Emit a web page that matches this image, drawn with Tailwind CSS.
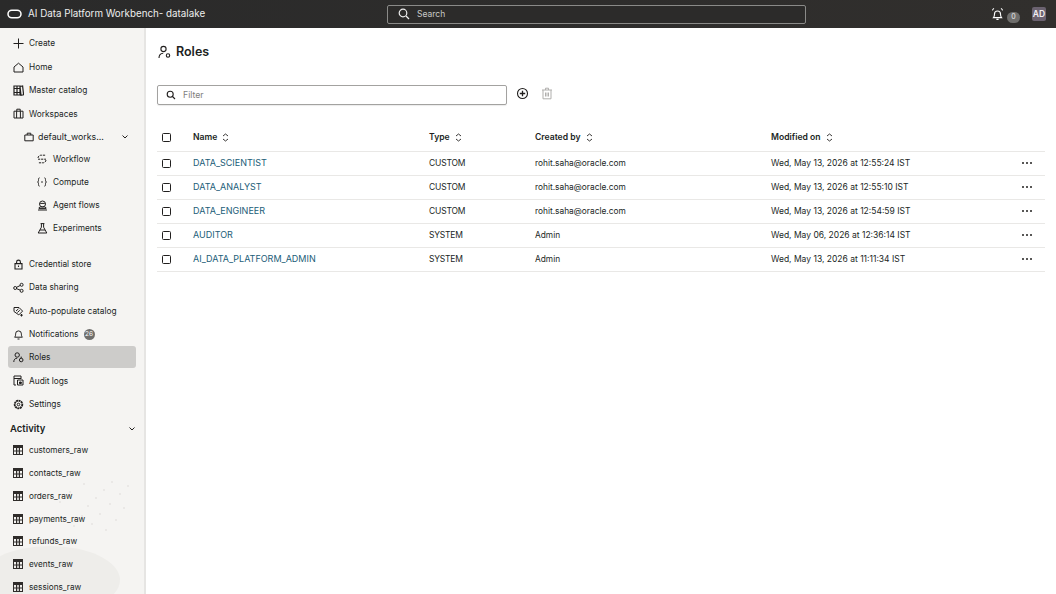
<!DOCTYPE html>
<html lang="en">
<head>
    <meta charset="UTF-8">
    <meta name="viewport" content="width=device-width, initial-scale=1.0">
    <title>Roles - AI Data Platform Workbench</title>
    <script src="https://cdn.jsdelivr.net/npm/@tailwindcss/browser@4"></script>
</head>
<body class="h-[594px] w-[1056px] overflow-hidden bg-white font-['Inter',sans-serif] text-[#211f1e]">
    <!-- top bar -->
    <header class="flex h-[28px] items-center bg-gradient-to-r from-[#2a2a2a] to-[#312f2d] pl-[7px] text-white">
        <svg class="w-[15px] h-[10px]" viewBox="0 0 15 10" fill="none" stroke="#fff" stroke-width="1.5"><rect x="1" y="1.2" width="13" height="7.6" rx="3.8"/></svg>
        <span class="ml-[6px] w-[176px] whitespace-nowrap text-[9.8px] text-[#eeeeee]">AI Data Platform Workbench- datalake</span>
        <div class="ml-[183px] flex h-[19px] w-[419px] shrink-0 items-center rounded-[2px] border border-[#8a8a88] bg-[#2c2b2a] pl-[10px]">
            <svg class="w-[12px] h-[12px]" viewBox="0 0 12 12" fill="none" stroke="#eee" stroke-width="1.2"><circle cx="5" cy="5" r="3.8"/><path d="M8 8l3 3"/></svg>
            <span class="ml-[7px] text-[8.5px] text-[#c9c9c7]">Search</span>
        </div>
        <svg class="ml-[184px] w-[15px] h-[15px]" viewBox="0 0 15 15" fill="none" stroke="#fff" stroke-width="1.1"><path d="M3.5 10.6c.9-1 1-1.9 1-3.6a3 3 0 0 1 6 0c0 1.7.1 2.6 1 3.6zM6.4 12.4h2.2M2.4 3.4A3.6 3.6 0 0 1 4 1.4M12.6 3.4A3.6 3.6 0 0 0 11 1.4"/></svg>
        <span class="mt-[7px] ml-[2px] flex h-[11px] w-[13px] items-center justify-center rounded-full bg-[#6f6e6c] text-[7px] text-[#e8e8e8]">0</span>
        <span class="ml-[12px] flex h-[14px] w-[14px] items-center justify-center rounded-[2px] bg-[#6b6270] text-[8.5px] font-semibold text-[#f2eff3]">AD</span>
    </header>

    <div class="flex h-[566px]">
        <!-- sidebar -->
        <aside class="relative w-[146px] shrink-0 overflow-hidden border-r-2 border-[#e6e5e3] bg-[#f5f4f2] pt-[4px] text-[8.3px]">
            <svg class="absolute bottom-0 left-0 w-[146px] h-[130px]" viewBox="0 0 146 130" fill="none">
                <ellipse cx="50" cy="116" rx="70" ry="34" fill="#eeedea"/>
                <g fill="#e6e5e2">
                    <circle cx="112" cy="18" r="1"/><circle cx="104" cy="26" r="1"/><circle cx="120" cy="30" r="1"/><circle cx="96" cy="34" r="1"/><circle cx="110" cy="40" r="1"/><circle cx="88" cy="42" r="1"/><circle cx="124" cy="44" r="1"/><circle cx="100" cy="50" r="1"/><circle cx="82" cy="52" r="1"/><circle cx="116" cy="56" r="1"/><circle cx="92" cy="60" r="1"/><circle cx="74" cy="62" r="1"/><circle cx="106" cy="66" r="1"/><circle cx="60" cy="38" r="1"/><circle cx="70" cy="28" r="1"/><circle cx="84" cy="20" r="1"/><circle cx="128" cy="22" r="1"/>
                </g>
            </svg>

            <nav class="relative">
                <a class="flex h-[23.4px] items-center pl-[13px]">
                    <svg class="w-[11px] h-[11px]" viewBox="0 0 11 11" stroke="#211f1e" stroke-width="1"><path d="M5.5 .5v10M.5 5.5h10"/></svg>
                    <span class="ml-[5px]">Create</span>
                </a>
                <a class="flex h-[23.4px] items-center pl-[13px]">
                    <svg class="w-[11px] h-[11px]" viewBox="0 0 11 11" fill="none" stroke="#211f1e" stroke-width="1"><path d="M1 5l4.5-3.8L10 5v5H1z"/></svg>
                    <span class="ml-[5px]">Home</span>
                </a>
                <a class="flex h-[23.4px] items-center pl-[13px]">
                    <svg class="w-[11px] h-[11px]" viewBox="0 0 11 11" fill="none" stroke="#211f1e" stroke-width="1.2"><path d="M1 1h3v9H1zM4 1h3v9H4zM7 1.500l2.600-.5 1 8.800-2.600.4zM1 3.500h6M1 7.500h6"/></svg>
                    <span class="ml-[5px]">Master catalog</span>
                </a>
                <a class="flex h-[23.4px] items-center pl-[13px]">
                    <svg class="w-[11px] h-[11px]" viewBox="0 0 11 11" fill="none" stroke="#211f1e" stroke-width="1"><path d="M1 3.2h9v6.8H1zM3.8 3.2V1.2h3.4v2M3.6 3.2V10M7.400 3.2V10"/></svg>
                    <span class="ml-[5px]">Workspaces</span>
                </a>
                <a class="flex h-[22px] items-center pl-[24px] text-[8.8px]">
                    <svg class="w-[10px] h-[10px]" viewBox="0 0 10 10" fill="none" stroke="#211f1e" stroke-width="1"><path d="M.8 3h8.4v5.800H.8zM3.200 3V1.200h3.600V3"/></svg>
                    <span class="ml-[4px]">default_works...</span>
                    <svg class="ml-[18px] w-[6px] h-[4px]" viewBox="0 0 6 4" fill="none" stroke="#211f1e" stroke-width="1"><path d="M.5 .5L3 3l2.500-2.500"/></svg>
                </a>
                <a class="flex h-[23px] items-center pl-[37px]">
                    <svg class="w-[10px] h-[10px]" viewBox="0 0 10 10" fill="none" stroke="#211f1e" stroke-width="1" stroke-dasharray="2.200 .9"><path d="M1 4a3 3 0 0 1 3-2.800h5M9 6a3 3 0 0 1-3 2.800H1M1 5.200h8"/></svg>
                    <span class="ml-[6px]">Workflow</span>
                </a>
                <a class="flex h-[23px] items-center pl-[37px]">
                    <svg class="w-[10px] h-[10px]" viewBox="0 0 10 10" fill="none" stroke="#211f1e" stroke-width=".9"><path d="M2.600 .8C1.400.8 1.500 2 1.500 3.200S1.200 5 .5 5c.7 0 1 .6 1 1.800s-.1 2.400 1.100 2.400M7.400 .8c1.200 0 1.100 1.200 1.100 2.400s.3 1.800 1 1.800c-.7 0-1 .6-1 1.800s.1 2.400-1.100 2.400M4 5h2"/></svg>
                    <span class="ml-[6px]">Compute</span>
                </a>
                <a class="flex h-[23px] items-center pl-[37px]">
                    <svg class="w-[11px] h-[11px]" viewBox="0 0 11 11" fill="none" stroke="#211f1e" stroke-width="1"><circle cx="5.500" cy="4" r="3"/><path d="M3.200 3.400h4.600M2 7.600c1-1 6-1 7 0v1H2zM1 10h9"/></svg>
                    <span class="ml-[5px]">Agent flows</span>
                </a>
                <a class="flex h-[23px] items-center pl-[37px]">
                    <svg class="w-[11px] h-[11px]" viewBox="0 0 11 11" fill="none" stroke="#211f1e" stroke-width="1"><path d="M3.600 .6h3.800M4.400 .6v3.600L1.200 10h8.600L6.600 4.200V.6M3 7h5"/></svg>
                    <span class="ml-[5px]">Experiments</span>
                </a>

                <a class="mt-[13px] flex h-[23.4px] items-center pl-[13px]">
                    <svg class="w-[11px] h-[11px]" viewBox="0 0 11 11" fill="none" stroke="#211f1e" stroke-width="1.1"><path d="M2 4.600h7V10H2zM3.600 4.600V3a1.900 1.900 0 0 1 3.800 0v1.600M5.500 6.400v1.600"/></svg>
                    <span class="ml-[5px]">Credential store</span>
                </a>
                <a class="flex h-[23.4px] items-center pl-[13px]">
                    <svg class="w-[11px] h-[11px]" viewBox="0 0 11 11" fill="none" stroke="#211f1e" stroke-width="1"><circle cx="2.200" cy="6" r="1.500"/><circle cx="8.600" cy="2.800" r="1.500"/><circle cx="8.600" cy="8.800" r="1.500"/><path d="M3.600 5.300l3.600-1.800M3.600 6.700l3.600 1.400"/></svg>
                    <span class="ml-[5px]">Data sharing</span>
                </a>
                <a class="flex h-[23.4px] items-center pl-[13px]">
                    <svg class="w-[11px] h-[11px]" viewBox="0 0 11 11" fill="none" stroke="#211f1e" stroke-width="1"><path d="M1 1.500h5l3.600 3.600-3.800 3.800L1 5.500zM3 5l2.500-2.200M4.400 6.500l2.400-2.200M8.500 8v2.500M7.200 9.200h2.600"/></svg>
                    <span class="ml-[5px]">Auto-populate catalog</span>
                </a>
                <a class="flex h-[23.4px] items-center pl-[13px]">
                    <svg class="w-[11px] h-[11px]" viewBox="0 0 11 11" fill="none" stroke="#211f1e" stroke-width="1"><path d="M1.600 8.200c.9-.9 1-1.900 1-3.400a2.900 2.900 0 0 1 5.800 0c0 1.500.1 2.500 1 3.400zM4.500 10h2"/></svg>
                    <span class="ml-[5px]">Notifications</span>
                    <span class="ml-[5px] flex h-[11px] w-[11px] items-center justify-center rounded-full bg-[#6f6e6c] text-[6.5px] text-white">26</span>
                </a>
                <a class="mx-[8px] flex h-[22px] items-center rounded-[3px] bg-[#cdccca] pl-[5px]">
                    <svg class="w-[11px] h-[11px]" viewBox="0 0 11 11" fill="none" stroke="#211f1e" stroke-width="1"><circle cx="4.200" cy="3" r="2.200"/><path d="M.8 10c0-2.400 1.200-3.800 3.400-3.800"/><circle cx="8.200" cy="8" r="1.800"/><path d="M8.200 4.600v1.600"/></svg>
                    <span class="ml-[5px]">Roles</span>
                </a>
                <a class="mt-[1px] flex h-[23.4px] items-center pl-[13px]">
                    <svg class="w-[11px] h-[11px]" viewBox="0 0 11 11" fill="none" stroke="#211f1e" stroke-width="1"><path d="M3 10H1V1h7v3"/><path d="M4.500 5h5.500v5H4.500zM1 3.500h7"/><path d="M6.500 7h1.800v1.500H6.500z" fill="#211f1e"/></svg>
                    <span class="ml-[5px]">Audit logs</span>
                </a>
                <a class="flex h-[23.4px] items-center pl-[13px]">
                    <svg class="w-[11px] h-[11px]" viewBox="0 0 11 11" fill="none" stroke="#211f1e"><circle cx="5.500" cy="5.500" r="3.800" stroke-width="1.800" stroke-dasharray="2 .5"/><circle cx="5.500" cy="5.500" r="1.300" stroke-width="1"/></svg>
                    <span class="ml-[5px]">Settings</span>
                </a>

                <div class="mt-[3px] flex h-[20px] items-center justify-between pl-[10px] pr-[9px] text-[9.5px] font-semibold">
                    <span>Activity</span>
                    <svg class="w-[6px] h-[4px]" viewBox="0 0 6 4" fill="none" stroke="#211f1e" stroke-width="1"><path d="M.5 .5L3 3l2.500-2.500"/></svg>
                </div>
                <div class="text-[8.2px]">
                    <a class="flex h-[22.8px] items-center pl-[13px]">
                        <svg class="w-[10px] h-[10px]" viewBox="0 0 10 10"><path fill="#2f2c2a" fill-rule="evenodd" d="M0 0h10v10H0zM1 3v2.500h2V3zM4.200 3v2.500h1.600V3zM7 3v2.500h2V3zM1 6.500V9h2V6.500zM4.200 6.500V9h1.600V6.500zM7 6.500V9h2V6.500z"/></svg>
                        <span class="ml-[6px]">customers_raw</span>
                    </a>
                    <a class="flex h-[22.8px] items-center pl-[13px]">
                        <svg class="w-[10px] h-[10px]" viewBox="0 0 10 10"><path fill="#2f2c2a" fill-rule="evenodd" d="M0 0h10v10H0zM1 3v2.500h2V3zM4.200 3v2.500h1.600V3zM7 3v2.500h2V3zM1 6.500V9h2V6.500zM4.200 6.500V9h1.600V6.500zM7 6.500V9h2V6.500z"/></svg>
                        <span class="ml-[6px]">contacts_raw</span>
                    </a>
                    <a class="flex h-[22.8px] items-center pl-[13px]">
                        <svg class="w-[10px] h-[10px]" viewBox="0 0 10 10"><path fill="#2f2c2a" fill-rule="evenodd" d="M0 0h10v10H0zM1 3v2.500h2V3zM4.200 3v2.500h1.600V3zM7 3v2.500h2V3zM1 6.500V9h2V6.500zM4.200 6.500V9h1.600V6.500zM7 6.500V9h2V6.500z"/></svg>
                        <span class="ml-[6px]">orders_raw</span>
                    </a>
                    <a class="flex h-[22.8px] items-center pl-[13px]">
                        <svg class="w-[10px] h-[10px]" viewBox="0 0 10 10"><path fill="#2f2c2a" fill-rule="evenodd" d="M0 0h10v10H0zM1 3v2.500h2V3zM4.200 3v2.500h1.600V3zM7 3v2.500h2V3zM1 6.500V9h2V6.500zM4.200 6.500V9h1.600V6.500zM7 6.500V9h2V6.500z"/></svg>
                        <span class="ml-[6px]">payments_raw</span>
                    </a>
                    <a class="flex h-[22.8px] items-center pl-[13px]">
                        <svg class="w-[10px] h-[10px]" viewBox="0 0 10 10"><path fill="#2f2c2a" fill-rule="evenodd" d="M0 0h10v10H0zM1 3v2.500h2V3zM4.200 3v2.500h1.600V3zM7 3v2.500h2V3zM1 6.500V9h2V6.500zM4.200 6.500V9h1.600V6.500zM7 6.500V9h2V6.500z"/></svg>
                        <span class="ml-[6px]">refunds_raw</span>
                    </a>
                    <a class="flex h-[22.8px] items-center pl-[13px]">
                        <svg class="w-[10px] h-[10px]" viewBox="0 0 10 10"><path fill="#2f2c2a" fill-rule="evenodd" d="M0 0h10v10H0zM1 3v2.500h2V3zM4.200 3v2.500h1.600V3zM7 3v2.500h2V3zM1 6.500V9h2V6.500zM4.200 6.500V9h1.600V6.500zM7 6.500V9h2V6.500z"/></svg>
                        <span class="ml-[6px]">events_raw</span>
                    </a>
                    <a class="flex h-[22.8px] items-center pl-[13px]">
                        <svg class="w-[10px] h-[10px]" viewBox="0 0 10 10"><path fill="#2f2c2a" fill-rule="evenodd" d="M0 0h10v10H0zM1 3v2.500h2V3zM4.200 3v2.500h1.600V3zM7 3v2.500h2V3zM1 6.500V9h2V6.500zM4.200 6.500V9h1.600V6.500zM7 6.500V9h2V6.500z"/></svg>
                        <span class="ml-[6px]">sessions_raw</span>
                    </a>
                </div>
            </nav>
        </aside>

        <!-- main -->
        <main class="min-w-0 flex-1 pl-[11px] pr-[11px]">
            <div class="mt-[16px] flex h-[16px] items-center pl-[1px]">
                <svg class="w-[13px] h-[14px]" viewBox="0 0 13 14" fill="none" stroke="#211f1e" stroke-width="1.1"><circle cx="5.500" cy="4" r="2.600"/><path d="M1 13c0-3 1.500-4.600 4.200-4.800"/><circle cx="10" cy="10.500" r="1.700"/></svg>
                <h1 class="ml-[5px] text-[12.5px] font-semibold">Roles</h1>
            </div>

            <div class="mt-[25px] flex items-center">
                <div class="flex h-[20px] w-[350px] items-center rounded-[2px] border border-[#a3a2a0] pl-[8px] shadow-[0_1px_1px_rgba(0,0,0,0.08)]">
                    <svg class="w-[10px] h-[10px]" viewBox="0 0 10 10" fill="none" stroke="#211f1e" stroke-width="1.1"><circle cx="4.200" cy="4.200" r="3"/><path d="M6.500 6.500L9 9"/></svg>
                    <span class="ml-[7px] mt-[2px] text-[8.7px] text-[#807e7c]">Filter</span>
                </div>
                <svg class="ml-[9px] -mt-[3px] w-[13px] h-[13px]" viewBox="0 0 13 13" fill="none" stroke="#1f1d1c" stroke-width="1.1"><circle cx="6.500" cy="6.500" r="5"/><path d="M6.500 3.800v5.400M3.800 6.500h5.400" stroke-width="1.3"/></svg>
                <svg class="ml-[12px] -mt-[3px] w-[12px] h-[13px]" viewBox="0 0 12 13" fill="none" stroke="#b0afad" stroke-width="1"><path d="M1 3h10M4.500 3V1.200h3V3M2 3v8.800h8V3M4.500 5.500v4M6 5.500v4M7.500 5.500v4"/></svg>
            </div>

            <table class="mt-[19px] w-[888px] table-fixed border-collapse text-left text-[8.5px]">
                <thead>
                    <tr class="h-[27px] border-b border-[#e9e8e6] text-[8.6px]">
                        <th class="w-[36px] pl-[5px] font-semibold"><span class="block h-[9px] w-[9px] rounded-[1.5px] border border-[#211f1e]"></span></th>
                        <th class="w-[236px] font-semibold">Name <svg class="ml-[3px] inline w-[7px] h-[9px]" viewBox="0 0 7 9" fill="none" stroke="#211f1e" stroke-width=".9"><path d="M1 3l2.500-2L6 3M1 6l2.500 2L6 6"/></svg></th>
                        <th class="w-[106px] font-semibold">Type <svg class="ml-[3px] inline w-[7px] h-[9px]" viewBox="0 0 7 9" fill="none" stroke="#211f1e" stroke-width=".9"><path d="M1 3l2.500-2L6 3M1 6l2.500 2L6 6"/></svg></th>
                        <th class="w-[236px] font-semibold">Created by <svg class="ml-[3px] inline w-[7px] h-[9px]" viewBox="0 0 7 9" fill="none" stroke="#211f1e" stroke-width=".9"><path d="M1 3l2.500-2L6 3M1 6l2.500 2L6 6"/></svg></th>
                        <th class="font-semibold">Modified on <svg class="ml-[3px] inline w-[7px] h-[9px]" viewBox="0 0 7 9" fill="none" stroke="#211f1e" stroke-width=".9"><path d="M1 3l2.500-2L6 3M1 6l2.500 2L6 6"/></svg></th>
                        <th class="w-[23px]"></th>
                    </tr>
                </thead>
                <tbody>
                    <tr class="h-[24px] border-b border-[#e9e8e6]">
                        <td class="pl-[5px]"><span class="block h-[9px] w-[9px] rounded-[1.5px] border border-[#211f1e]"></span></td>
                        <td class="text-[9px] text-[#1b5d78]">DATA_SCIENTIST</td>
                        <td class="text-[8.5px] tracking-[-0.2px]">CUSTOM</td>
                        <td class="text-[8.35px]">rohit.saha@oracle.com</td>
                        <td class="text-[8.5px]">Wed, May 13, 2026 at 12:55:24 IST</td>
                        <td><svg class="w-[10px] h-[2px]" viewBox="0 0 10 2" fill="#211f1e"><circle cx="1" cy="1" r="1"/><circle cx="5" cy="1" r="1"/><circle cx="9" cy="1" r="1"/></svg></td>
                    </tr>
                    <tr class="h-[24px] border-b border-[#e9e8e6]">
                        <td class="pl-[5px]"><span class="block h-[9px] w-[9px] rounded-[1.5px] border border-[#211f1e]"></span></td>
                        <td class="text-[9px] text-[#1b5d78]">DATA_ANALYST</td>
                        <td class="text-[8.5px] tracking-[-0.2px]">CUSTOM</td>
                        <td class="text-[8.35px]">rohit.saha@oracle.com</td>
                        <td class="text-[8.5px]">Wed, May 13, 2026 at 12:55:10 IST</td>
                        <td><svg class="w-[10px] h-[2px]" viewBox="0 0 10 2" fill="#211f1e"><circle cx="1" cy="1" r="1"/><circle cx="5" cy="1" r="1"/><circle cx="9" cy="1" r="1"/></svg></td>
                    </tr>
                    <tr class="h-[24px] border-b border-[#e9e8e6]">
                        <td class="pl-[5px]"><span class="block h-[9px] w-[9px] rounded-[1.5px] border border-[#211f1e]"></span></td>
                        <td class="text-[9px] text-[#1b5d78]">DATA_ENGINEER</td>
                        <td class="text-[8.5px] tracking-[-0.2px]">CUSTOM</td>
                        <td class="text-[8.35px]">rohit.saha@oracle.com</td>
                        <td class="text-[8.5px]">Wed, May 13, 2026 at 12:54:59 IST</td>
                        <td><svg class="w-[10px] h-[2px]" viewBox="0 0 10 2" fill="#211f1e"><circle cx="1" cy="1" r="1"/><circle cx="5" cy="1" r="1"/><circle cx="9" cy="1" r="1"/></svg></td>
                    </tr>
                    <tr class="h-[24px] border-b border-[#e9e8e6]">
                        <td class="pl-[5px]"><span class="block h-[9px] w-[9px] rounded-[1.5px] border border-[#211f1e]"></span></td>
                        <td class="text-[9px] text-[#1b5d78]">AUDITOR</td>
                        <td class="text-[8.5px] tracking-[-0.2px]">SYSTEM</td>
                        <td class="text-[8.35px]">Admin</td>
                        <td class="text-[8.5px]">Wed, May 06, 2026 at 12:36:14 IST</td>
                        <td><svg class="w-[10px] h-[2px]" viewBox="0 0 10 2" fill="#211f1e"><circle cx="1" cy="1" r="1"/><circle cx="5" cy="1" r="1"/><circle cx="9" cy="1" r="1"/></svg></td>
                    </tr>
                    <tr class="h-[24px] border-b border-[#e9e8e6]">
                        <td class="pl-[5px]"><span class="block h-[9px] w-[9px] rounded-[1.5px] border border-[#211f1e]"></span></td>
                        <td class="text-[9px] text-[#1b5d78]">AI_DATA_PLATFORM_ADMIN</td>
                        <td class="text-[8.5px] tracking-[-0.2px]">SYSTEM</td>
                        <td class="text-[8.35px]">Admin</td>
                        <td class="text-[8.5px]">Wed, May 13, 2026 at 11:11:34 IST</td>
                        <td><svg class="w-[10px] h-[2px]" viewBox="0 0 10 2" fill="#211f1e"><circle cx="1" cy="1" r="1"/><circle cx="5" cy="1" r="1"/><circle cx="9" cy="1" r="1"/></svg></td>
                    </tr>
                </tbody>
            </table>
        </main>
    </div>
</body>
</html>
